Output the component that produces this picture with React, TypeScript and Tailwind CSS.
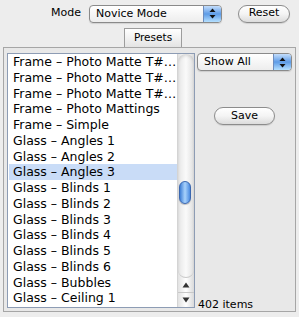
import React from "react";

const rows = [
  "Frame – Photo Matte T#…",
  "Frame – Photo Matte T#…",
  "Frame – Photo Matte T#…",
  "Frame – Photo Mattings",
  "Frame – Simple",
  "Glass – Angles 1",
  "Glass – Angles 2",
  "Glass – Angles 3",
  "Glass – Blinds 1",
  "Glass – Blinds 2",
  "Glass – Blinds 3",
  "Glass – Blinds 4",
  "Glass – Blinds 5",
  "Glass – Blinds 6",
  "Glass – Bubbles",
  "Glass – Ceiling 1",
];

function Arrows() {
  return (
    <svg width="7" height="11" viewBox="0 0 7 11">
      <path d="M3.5 0.5 L6.5 4 L0.5 4 Z" fill="#111" />
      <path d="M3.5 10.5 L6.5 7 L0.5 7 Z" fill="#111" />
    </svg>
  );
}

function Popup({ label, width }: { label: string; width: string }) {
  return (
    <div
      className={`flex h-[18px] items-stretch rounded-[4px] border border-[#8a8a8a] bg-gradient-to-b from-white to-[#ededed] shadow-[0_1px_1px_rgba(0,0,0,0.12)] ${width}`}
    >
      <span className="flex-1 pl-[6px] leading-[16px] text-[11px]">{label}</span>
      <span className="flex w-[18px] items-center justify-center rounded-r-[3px] border-l border-[#6d8cbd] bg-gradient-to-b from-[#c4defc] via-[#5d9be6] to-[#b5e0ff]">
        <Arrows />
      </span>
    </div>
  );
}

function PushButton({ label, width }: { label: string; width: string }) {
  return (
    <div
      className={`flex h-[18px] items-center justify-center rounded-full border border-[#8c8c8c] bg-gradient-to-b from-white via-[#f4f4f4] to-[#dcdcdc] text-[11px] shadow-[0_1px_1px_rgba(0,0,0,0.12)] ${width}`}
    >
      {label}
    </div>
  );
}

export default function App() {
  return (
    <div className="h-[317px] w-[299px] overflow-hidden bg-[#ededed] font-['DejaVu_Sans','Liberation_Sans',sans-serif] text-black">
      {/* top bar */}
      <div className="flex h-[26px] items-center pl-[51px] pt-[1px]">
        <span className="w-[38px] text-[11px]">Mode</span>
        <Popup label="Novice Mode" width="w-[133px]" />
        <div className="ml-[16px]">
          <PushButton label="Reset" width="w-[52px]" />
        </div>
      </div>

      {/* tab */}
      <div className="mt-[2px] ml-[124px] flex h-[19px] w-[58px] items-center justify-center border border-b-0 border-[#9c9c9c] bg-gradient-to-b from-white to-[#e4e4e4] text-[10.5px]">
        Presets
      </div>

      {/* group box */}
      <div className="ml-[3px] flex h-[265px] w-[293px] border border-[#a6a6a6] bg-[#e8e8e8] pl-[3px] pt-[5px]">
        {/* list */}
        <div className="flex h-[255px] w-[188px] border border-[#8d9cb4] bg-white">
          <div className="flex-1 overflow-hidden pl-[1px]">
            {rows.map((r, i) => (
              <div
                key={i}
                className={`h-[15.75px] whitespace-nowrap pl-[4px] text-[12.5px] leading-[15.75px] ${
                  i === 7 ? "bg-[#c9dcf7]" : ""
                }`}
              >
                {r}
              </div>
            ))}
          </div>
          {/* scrollbar */}
          <div className="relative flex w-[17px] flex-col border-l border-[#d4d4d4] bg-gradient-to-r from-[#e2e2e2] via-white to-[#dadada]">
            <div className="flex-1 rounded-b-[8px] rounded-t-[8px] border-b border-[#c8c8c8] bg-gradient-to-r from-[#e6e6e6] via-[#fafafa] to-[#e0e0e0] shadow-[inset_0_2px_3px_rgba(0,0,0,0.12)]" />
            <div className="flex h-[15px] items-center justify-center border-b border-[#c8c8c8]">
              <svg width="8" height="6" viewBox="0 0 8 6">
                <path d="M4 0.5 L7.5 5.5 L0.5 5.5 Z" fill="#333" />
              </svg>
            </div>
            <div className="flex h-[14px] items-center justify-center">
              <svg width="8" height="6" viewBox="0 0 8 6">
                <path d="M4 5.5 L7.5 0.5 L0.5 0.5 Z" fill="#333" />
              </svg>
            </div>
            <div className="absolute left-[1px] top-[127px] h-[23px] w-[12px] rounded-full border border-[#3a67b0] bg-gradient-to-r from-[#3f7fd6] via-[#a9d2fb] to-[#4a8ae0] shadow-[0_1px_1px_rgba(0,0,0,0.25)]" />
          </div>
        </div>

        {/* right column */}
        <div className="ml-[2px] flex h-[258px] w-[95px] flex-col items-center">
          <Popup label="Show All" width="w-[95px]" />
          <div className="mt-[36px]">
            <PushButton label="Save" width="w-[61px]" />
          </div>
          <div className="mt-auto w-full pl-[1px] text-[11px] leading-[13px]">402 items</div>
        </div>
      </div>
    </div>
  );
}
